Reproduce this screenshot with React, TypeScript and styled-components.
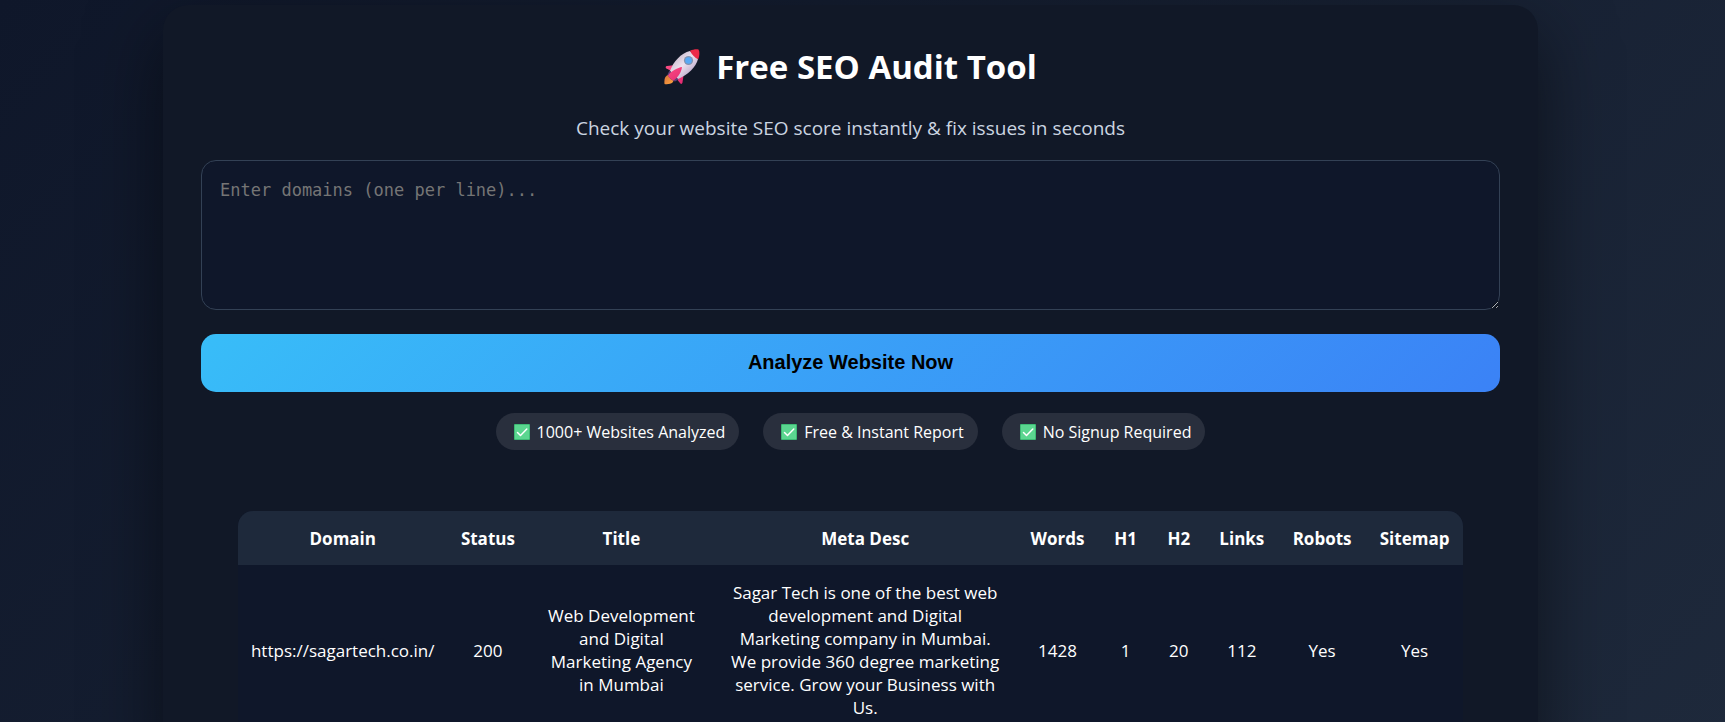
import React from "react";
import styled, { createGlobalStyle } from "styled-components";

const GlobalStyle = createGlobalStyle`
  *, *::before, *::after { box-sizing: border-box; }
  body {
    margin: 0;
    background: #0f172a;
    color: #ffffff;
    font-family: "Open Sans", "Noto Sans", sans-serif;
  }
`;

const Page = styled.div`
  min-height: 100vh;
  padding: 5px 24px 0 0;
  overflow: hidden;
  background: linear-gradient(135deg, #0f172a, #1e293b);
`;

const Card = styled.main`
  display: flex;
  flex-direction: column;
  max-width: 1375px;
  margin: 0 auto;
  padding: 37px 38px;
  border-radius: 25px;
  background: #111827;
  box-shadow: 0 25px 75px rgba(0, 0, 0, 0.5);
`;

const Heading = styled.h1`
  display: flex;
  align-items: center;
  justify-content: center;
  gap: 16px;
  margin: 0;
  font-size: 33px;
  font-weight: 700;
  line-height: 50px;
`;

const Subtitle = styled.p`
  margin: 22px 0 0;
  color: #cbd5e1;
  font-size: 19px;
  line-height: 28px;
  text-align: center;
`;

const DomainInput = styled.textarea`
  display: block;
  width: 100%;
  height: 150px;
  margin-top: 18px;
  padding: 18px;
  border: 1px solid #334155;
  border-radius: 15px;
  background: #0f172a;
  color: #ffffff;
  font-family: "DejaVu Sans Mono", "Liberation Mono", monospace;
  font-size: 17px;
  line-height: 22px;
  resize: vertical;

  &::placeholder { color: #757575; opacity: 1; }
`;

const AnalyzeButton = styled.button`
  width: 100%;
  height: 58px;
  margin-top: 24px;
  padding: 0 0 2px;
  border: 0;
  border-radius: 15px;
  background: linear-gradient(135deg, #38bdf8, #3b82f6);
  color: #000000;
  font-family: "Liberation Sans", Arial, sans-serif;
  font-size: 20px;
  font-weight: 700;
  cursor: pointer;
`;

const Badges = styled.ul`
  display: flex;
  flex-wrap: wrap;
  justify-content: center;
  gap: 24px;
  margin: 21px 0 0;
  padding: 0;
  list-style: none;
`;

const Badge = styled.li`
  display: flex;
  align-items: center;
  gap: 7px;
  height: 37px;
  padding: 0 14px 0 18px;
  border-radius: 25px;
  background: #292f3d;
  font-size: 16px;
  white-space: nowrap;
`;

const Results = styled.section`
  margin: 61px 37px 0;
  border-radius: 15px;
  overflow: hidden;
`;

const ResultsTable = styled.table`
  width: 100%;
  table-layout: fixed;
  border-collapse: collapse;
  background: #0f172a;
  font-size: 17px;
  line-height: 23px;
  text-align: center;
`;

const Column = styled.col<{ $share: number }>`
  width: ${({ $share }) => $share}%;
`;

const HeaderCell = styled.th`
  padding: 16px 0 15px;
  background: #1e293b;
  font-weight: 700;
`;

const Cell = styled.td<{ $flush?: boolean }>`
  padding: 16px ${({ $flush }) => ($flush ? 0 : 14)}px;
`;

const RocketIcon = () => (
  <svg width="36" height="36" viewBox="0 0 36 36" aria-hidden="true">
    <defs>
      <linearGradient id="hull" x1="10" y1="10" x2="25" y2="25" gradientUnits="userSpaceOnUse">
        <stop offset="0" stopColor="#cdbfd0" />
        <stop offset="0.5" stopColor="#ece1ee" />
        <stop offset="1" stopColor="#c4b2d0" />
      </linearGradient>
      <linearGradient id="fin" x1="4" y1="16" x2="18" y2="34" gradientUnits="userSpaceOnUse">
        <stop offset="0" stopColor="#fb4d84" />
        <stop offset="1" stopColor="#e52b72" />
      </linearGradient>
      <linearGradient id="flame" x1="1" y1="27" x2="9" y2="35" gradientUnits="userSpaceOnUse">
        <stop offset="0" stopColor="#d9763c" />
        <stop offset="1" stopColor="#ffa43c" />
      </linearGradient>
    </defs>
    <path d="M4 26 C1 27 0 30 0.5 35 C3 35.5 7 35 8.5 33.5 C10 32 10 29 8 27 Z" fill="url(#flame)" />
    <path d="M12 16 L3 17 C1.500 17.300 1.300 18.500 2.200 19.300 L7 22 Z" fill="url(#fin)" />
    <path d="M20 23 L18.500 33.500 C18.200 35 17 35.300 16.200 34.300 L12 29 Z" fill="url(#fin)" />
    <path d="M6 22 C9 13 17 4 26 2 L34 10 C32 18 24 26 14 30 Z" fill="url(#hull)" />
    <path d="M26 1.800 C29 0.500 32.500 0 34.500 0.600 C36 3 35.500 7 34.200 10.300 C31 9 28 6 26 1.800 Z" fill="#ec2947" />
    <path d="M5.500 21.500 L3.500 25.500 C5 29 8 31.500 11 32.500 L14.500 30.500 Z" fill="#5c3d76" />
    <path d="M18 18 C14 18.500 7 22 4 26.500 C5.500 29 7 30.500 9.500 31.500 C14 28.500 17.500 23 18 18 Z" fill="url(#fin)" />
    <circle cx="24.500" cy="11.500" r="4.600" fill="#8392ae" />
    <circle cx="24.500" cy="11.500" r="3.300" fill="#58a9f5" />
  </svg>
);

const CheckIcon = () => (
  <svg width="16" height="16" viewBox="0 0 16 16" aria-hidden="true">
    <rect width="16" height="16" rx="1" fill="#3dbb75" />
    <rect x="1" y="1" width="14" height="14" fill="#5bd690" />
    <path d="M3.500 8.500 L6.500 11.500 L12.800 5" fill="none" stroke="#ffffff" strokeWidth="1.500" strokeLinecap="round" strokeLinejoin="round" />
  </svg>
);

const badges = ["1000+ Websites Analyzed", "Free & Instant Report", "No Signup Required"];

const columns = [
  { label: "Domain", share: 17.1 },
  { label: "Status", share: 6.6 },
  { label: "Title", share: 15.2 },
  { label: "Meta Desc", share: 24.6 },
  { label: "Words", share: 6.8 },
  { label: "H1", share: 4.3 },
  { label: "H2", share: 4.4 },
  { label: "Links", share: 5.9 },
  { label: "Robots", share: 7.2 },
  { label: "Sitemap", share: 7.9 },
];

const results = [
  {
    domain: "https://sagartech.co.in/",
    status: 200,
    title: "Web Development and Digital Marketing Agency in Mumbai",
    meta: "Sagar Tech is one of the best web development and Digital Marketing company in Mumbai. We provide 360 degree marketing service. Grow your Business with Us.",
    figures: ["1428", "1", "20", "112", "Yes", "Yes"],
  },
];

export default function App() {
  return (
    <>
      <GlobalStyle />
      <Page>
        <Card>
          <Heading>
            <RocketIcon />
            Free SEO Audit Tool
          </Heading>
          <Subtitle>Check your website SEO score instantly &amp; fix issues in seconds</Subtitle>
          <DomainInput aria-label="Domains" placeholder="Enter domains (one per line)..." />
          <AnalyzeButton type="button">Analyze Website Now</AnalyzeButton>
          <Badges>
            {badges.map((label) => (
              <Badge key={label}>
                <CheckIcon />
                {label}
              </Badge>
            ))}
          </Badges>
          <Results>
            <ResultsTable>
              <colgroup>
                {columns.map(({ label, share }) => (
                  <Column key={label} $share={share} />
                ))}
              </colgroup>
              <thead>
                <tr>
                  {columns.map(({ label }) => (
                    <HeaderCell key={label} scope="col">{label}</HeaderCell>
                  ))}
                </tr>
              </thead>
              <tbody>
                {results.map((row) => (
                  <tr key={row.domain}>
                    <Cell $flush>{row.domain}</Cell>
                    <Cell $flush>{row.status}</Cell>
                    <Cell>{row.title}</Cell>
                    <Cell>{row.meta}</Cell>
                    {row.figures.map((figure, index) => (
                      <Cell $flush key={index}>{figure}</Cell>
                    ))}
                  </tr>
                ))}
              </tbody>
            </ResultsTable>
          </Results>
        </Card>
      </Page>
    </>
  );
}
